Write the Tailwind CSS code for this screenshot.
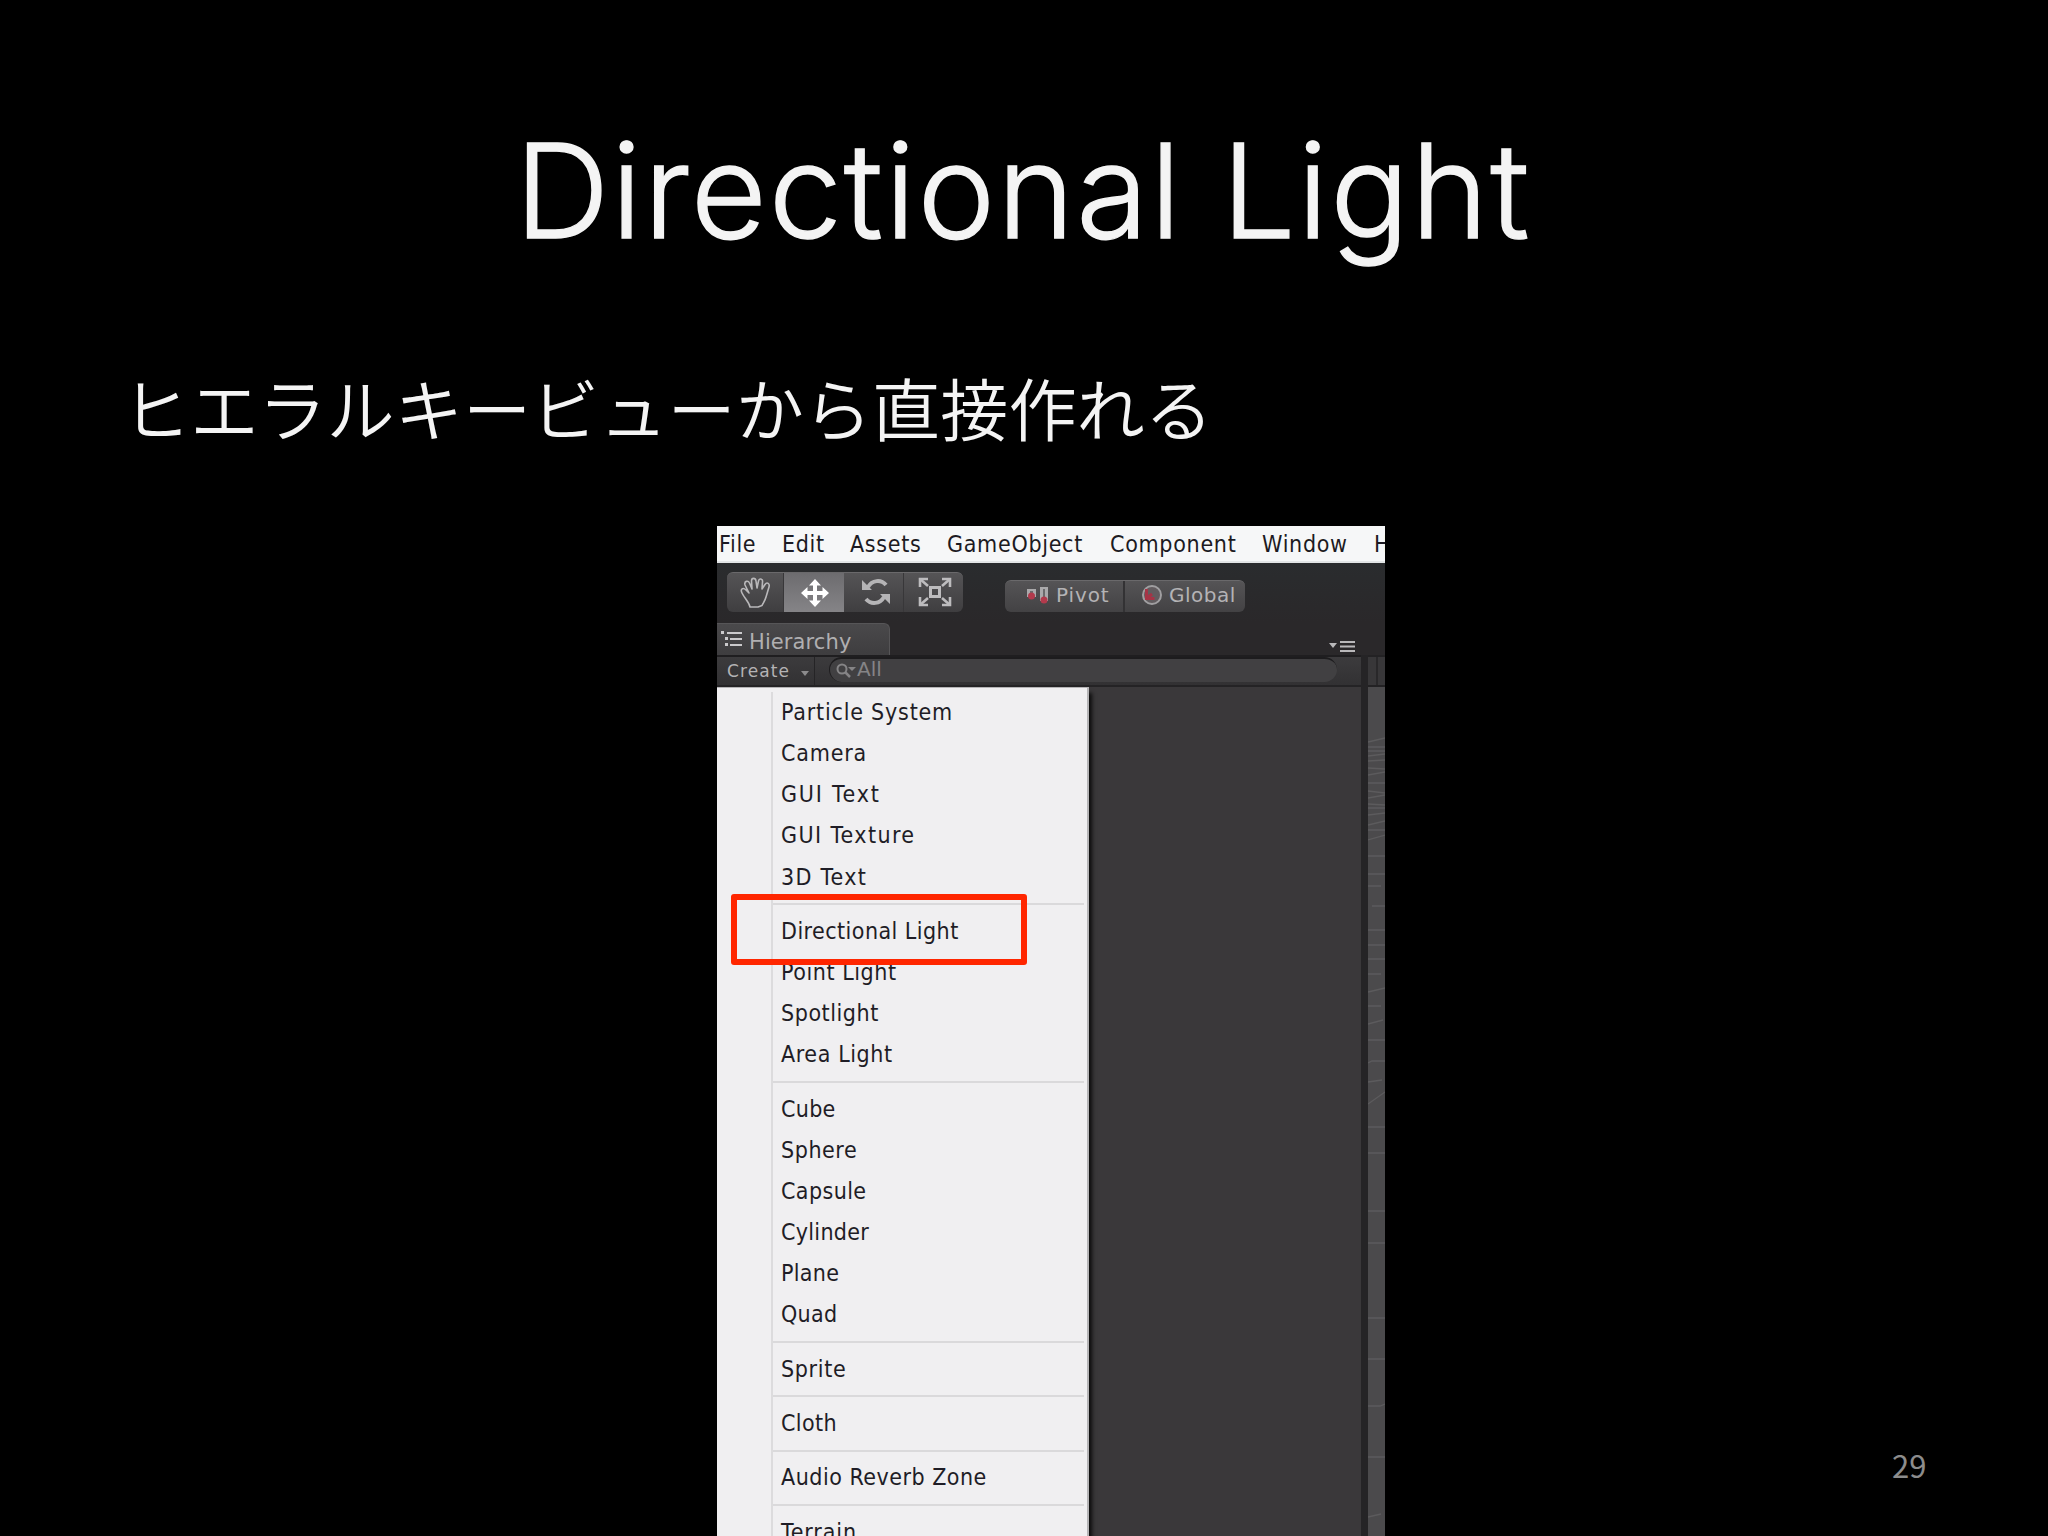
<!DOCTYPE html>
<html lang="ja">
<head>
  <meta charset="UTF-8" />
  <meta name="viewport" content="width=device-width, initial-scale=1.0"/>
  <title>Directional Light</title>
  <script src="https://cdn.jsdelivr.net/npm/@tailwindcss/browser@4"></script>
</head>
<body class="bg-black">
  <section class="relative w-[2048px] h-[1536px] overflow-hidden bg-black text-[#f4f4f4] flex flex-col">
    <h1 class="h-[352px] pt-[103px] pl-[515px] font-['Inter','Noto_Sans_CJK_JP',sans-serif] font-light text-[131px] leading-[176px] tracking-[2px] [-webkit-text-stroke:1.4px_#f4f4f4] whitespace-nowrap">Directional Light</h1>
    <p class="h-[174px] pl-[122px] pt-[5px] font-['Noto_Sans_CJK_JP',sans-serif] font-[350] text-[68.2px] leading-[100px] whitespace-nowrap">ヒエラルキービューから直接作れる</p>

    <!-- Editor window -->
    <div class="relative ml-[717px] w-[668px] h-[1010px] overflow-hidden bg-[#2a282a] flex flex-col">
      <!-- Menu bar -->
      <div class="h-[37px] shrink-0 bg-[#f6f7f8] border-b-2 border-[#e2e5e6] flex items-center pl-[2px] pt-px text-[#1c1a22] font-['DejaVu_Sans_Condensed','DejaVu_Sans',sans-serif] text-[23px] tracking-[0.7px] whitespace-nowrap">
        <span class="w-[63px] shrink-0">File</span>
        <span class="w-[68px] shrink-0">Edit</span>
        <span class="w-[97px] shrink-0">Assets</span>
        <span class="w-[163px] shrink-0">GameObject</span>
        <span class="w-[152px] shrink-0">Component</span>
        <span class="w-[112px] shrink-0">Window</span>
        <span class="shrink-0">H</span>
      </div>

      <!-- Toolbar -->
      <div class="h-[60px] shrink-0 pl-[10px] pt-[9px] flex items-start bg-linear-to-b from-[#2a2c2e] to-[#2a282a]">
        <div class="w-[236px] h-[40px] flex rounded-md overflow-hidden border-t border-[#6a696b] bg-linear-to-b from-[#555456] to-[#3f3e40]">
          <div class="w-[57px] flex items-center justify-center border-r border-[#383739]">
            <svg class="w-[31px] h-[31px]" viewBox="0 0 31 31" fill="none" stroke="#b9b8ba" stroke-width="1.6" stroke-linejoin="round"><path d="M10 30C9 25 5 22 2 16C0 12 3 10 6 13L9 16L5 8C4 4 8 3 9.500 6L12 12L11.500 4C11.500.5 15.500.5 16 4L17 11L18.500 4C19 1 23 1.500 22.500 5L22 12L25 7.500C27 4.500 30 6.500 29 10L26 20C25 24 23 26 22 28.500L18 30z"/></svg>
          </div>
          <div class="w-[60px] flex items-center justify-center pl-[1px] pt-px bg-linear-to-b from-[#6d6c6f] to-[#858487]">
            <svg class="w-[28px] h-[28px]" viewBox="0 0 28 28" fill="#fff"><path d="M14 0l6 6.500h-4V12h5.500V8L28 14l-6.500 6V16H16v5.500h4L14 28l-6-6.500h4V16H6.500v4L0 14l6.500-6v4H12V6.500H8z"/></svg>
          </div>
          <div class="w-[60px] flex items-center justify-center pl-[4px] border-r border-[#383739]">
            <svg class="w-[28px] h-[28px] -mt-[2px]" viewBox="0 0 28 28"><g fill="none" stroke="#b5b4b6" stroke-width="4"><path d="M6 9c4-7 13-8 18-2"/><path d="M22 19c-4 7-13 8-18 2"/></g><path fill="#b5b4b6" d="M0 2v10h10zM28 26V16H18z"/></svg>
          </div>
          <div class="w-[58px] flex items-center justify-center pl-[4px]">
            <svg class="w-[34px] h-[30px] -mt-[2px]" viewBox="0 0 34 30"><path fill="none" stroke="#bdbcbe" stroke-width="3" d="M12.500 10.500h9v9h-9z"/><path fill="none" stroke="#bdbcbe" stroke-width="2.600" d="M2 2l8 7M32 2l-8 7M2 28l8-7M32 28l-8-7"/><path fill="none" stroke="#bdbcbe" stroke-width="2.600" d="M2 10V2h8M24 2h8v8M2 20v8h8M24 28h8v-8"/></svg>
          </div>
        </div>
        <div class="ml-[42px] mt-[8px] w-[240px] h-[32px] flex rounded-md overflow-hidden border-t border-[#6a696b] bg-linear-to-b from-[#555456] to-[#434244] text-[#b4b3b5] font-['DejaVu_Sans',sans-serif] text-[20px] leading-[28px]">
          <div class="w-[120px] flex items-center border-r-2 border-[#333234] pl-[21px]">
            <svg class="w-[23px] h-[18px] mr-[7px] -mt-[2px]" viewBox="0 0 23 18"><path fill="#aaa9ab" d="M1 2h9v8H1zM14 0h8v14h-8z"/><path fill="#6b6a6c" d="M4 4h3v5H4zM17 2h2v9h-2z"/><circle cx="5.500" cy="9" r="3.500" fill="#b23a4c"/><circle cx="18" cy="13" r="3.500" fill="#b23a4c"/></svg>
            <span class="-mt-[4px] tracking-[0.9px]">Pivot</span>
          </div>
          <div class="flex items-center pl-[16px]">
            <svg class="w-[22px] h-[22px] mr-[6px] -mt-[4px]" viewBox="0 0 22 22"><circle cx="11" cy="11" r="9" fill="#625c5f" stroke="#a09fa1" stroke-width="2"/><path fill="none" stroke="#a53446" stroke-width="3" d="M5.500 5v9.500h8M6 14l5-4"/></svg>
            <span class="-mt-[4px] tracking-[0.5px]">Global</span>
          </div>
        </div>
      </div>

      <!-- Tab row -->
      <div class="h-[32px] shrink-0 flex justify-between items-end">
        <div class="w-[173px] h-[32px] flex items-center rounded-tr-md border-t border-r border-[#565557] bg-linear-to-b from-[#4a494b] to-[#3e3d3f] text-[#b0afb1]">
          <svg class="ml-[4px] mt-[-2px] w-[21px] h-[16px] mr-[7px]" viewBox="0 0 21 16" fill="#cbcacc"><path d="M0 0h3v3H0zM6 1h15v2H6zM4 6h3v3H4zM9 7h12v2H9zM4 12h3v3H4zM9 13h12v2H9z"/></svg>
          <span class="font-['DejaVu_Sans',sans-serif] text-[21px] tracking-[0.1px] mt-[7px]">Hierarchy</span>
        </div>
        <svg class="w-[26px] h-[12px] mr-[30px] mb-[2px]" viewBox="0 0 26 12" fill="#b9b8ba"><path d="M0 2h8l-4 5zM11 0h15v2H11zM11 4.500h15v2H11zM11 9h15v2H11z"/></svg>
      </div>

      <div class="flex-1 flex">
        <div class="w-[644px] flex flex-col">
          <!-- Create / search -->
          <div class="h-[32px] shrink-0 flex items-start border-y-2 border-t-[#1f1e20] border-b-[#242325] bg-linear-to-b from-[#3c3b3d] to-[#323133] text-[#b4b3b5] font-['DejaVu_Sans',sans-serif]">
            <div class="w-[98px] h-full flex items-center border-r border-[#252426] pl-[10px] text-[17px]">
              <span class="w-[74px] mt-[2px] tracking-[1.1px]">Create</span>
              <svg class="w-[8px] h-[5px] mt-1" viewBox="0 0 8 5" fill="#8c8b8d"><path d="M0 0h8L4 5z"/></svg>
            </div>
            <div class="ml-[14px] w-[508px] h-[25px] rounded-full border-t-2 border-l border-[#1d1c1e] bg-[#414042] flex items-center pl-[6px] text-[#858486] text-[20px]">
              <svg class="w-[20px] h-[15px] mr-[1px]" viewBox="0 0 20 15"><circle cx="6" cy="6" r="4.500" fill="none" stroke="#858486" stroke-width="2"/><path stroke="#858486" stroke-width="2.500" d="M9 9l5 5"/><path fill="#858486" d="M12 4h8l-4 4z"/></svg>
              <span class="-mt-[3px]">All</span>
            </div>
          </div>

          <div class="flex-1 flex bg-[#3a383a]">
            <!-- Create menu -->
            <ul id="createMenu" class="w-[372px] pt-[4px] bg-[#f0eff1] border-t border-r-2 border-[#b5b4b6] shadow-[3px_6px_4px_rgba(0,0,0,0.8)] text-[#1f1d26] font-['DejaVu_Sans_Condensed','DejaVu_Sans',sans-serif] text-[23px]"></ul>
          </div>
        </div>
        <!-- Splitter and scene view edge -->
        <div class="w-[7px] bg-[#252426]"></div>
        <div class="flex-1 flex flex-col bg-[#4b4a4c]">
          <div class="h-[32px] border-y-2 border-[#232224] bg-[#383739] flex justify-center"><div class="w-[2px] bg-[#29282a]"></div></div>
          <svg class="w-[17px] h-[848px]" viewBox="0 0 17 848" fill="none" stroke="#5c5b5d" stroke-width="1.300"><path d="M0 55l17-4M0 60h17M0 64h17M0 69l17-2M0 74l17-1M0 81l17 1M0 88l17-3M0 96h17M0 104l17 2M0 111l17-3M0 117l17 1M0 121h17M0 128l17-2M0 138l17-4M0 143h17M0 153l17-5M0 169h17M0 187h17M0 199h13M4 219h13M0 243h17M0 258h17M0 272h17M0 287h13M0 305l17-4M0 319h13M0 337l15-4M0 353h17M0 376l4-2h13M0 395l14-2M0 417l17-12M0 440h17M0 466h17M0 524h17M0 556h17M0 631h17M0 672h17M0 719h12l5-2M0 770h17M0 830l13-3"/></svg>
        </div>
      </div>

      <!-- Highlight -->
      <div class="absolute left-[14px] top-[368px] w-[296px] h-[71px] border-6 border-[#ff2600] rounded-[3px]"></div>
    </div>

    <span class="absolute left-[1892px] top-[1442px] font-['Noto_Sans_CJK_JP',sans-serif] text-[31px] leading-[46px] text-[#8c8c8c]">29</span>
  </section>

  <script>
    const createMenu = document.getElementById('createMenu');

    // label, letter spacing in px
    const groups = [
      [['Particle System', 0.8], ['Camera', 0.8], ['GUI Text', 1.8], ['GUI Texture', 1.4], ['3D Text', 1.3]],
      [['Directional Light', 0.45], ['Point Light', 0.55], ['Spotlight', 0.55], ['Area Light', 0.6]],
      [['Cube', 0.3], ['Sphere', 0.55], ['Capsule', 0.4], ['Cylinder', 0.3], ['Plane', 0.3], ['Quad', 0.3]],
      [['Sprite', 0.65]],
      [['Cloth', 0.4]],
      [['Audio Reverb Zone', 0.5]],
      [['Terrain', 0.9]]
    ];

    groups.forEach((items, index) => {
      if (index > 0) {
        createMenu.innerHTML += `
          <li class="ml-[54px] h-[13.2px] pr-[3px] border-l-2 border-[#dcdbdd] flex items-center"><span class="w-full h-[2px] bg-[#dad9db]"></span></li>
        `;
      }
      items.forEach(([label, spacing]) => {
        createMenu.innerHTML += `
          <li class="ml-[54px] h-[41.15px] pl-[8px] border-l-2 border-[#dcdbdd] leading-[40px] whitespace-nowrap" style="letter-spacing: ${spacing}px">${label}</li>
        `;
      });
    });
  </script>
</body>
</html>
